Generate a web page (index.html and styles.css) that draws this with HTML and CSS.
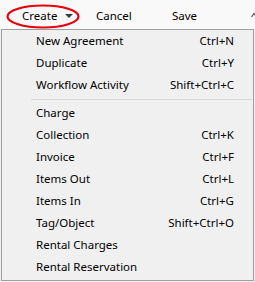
FILE: index.html
```html
<!DOCTYPE html>
<html lang="en">
<head>
    <meta charset="UTF-8">
    <title>Create menu</title>
    <link rel="stylesheet" href="styles.css">
</head>
<body>

    <!-- toolbar -->
    <div class="toolbar">
        <span class="tool tool-create">Create <span class="caret"></span></span>
        <span class="tool tool-cancel">Cancel</span>
        <span class="tool tool-save">Save</span>
        <svg class="collapse" width="6" height="6" viewBox="0 0 6 6"><path d="M0.5 5 L3 1.5 L5.5 5" fill="none" stroke="#555" stroke-width="1.2"/></svg>
        <!-- red highlight drawn over the Create button -->
        <svg class="highlight" width="74" height="25" viewBox="0 0 74 25"><ellipse cx="37" cy="12.5" rx="35.5" ry="11" fill="none" stroke="#e8000b" stroke-width="2.2"/></svg>
    </div>

    <!-- dropdown -->
    <div class="menu">
        <div class="item"><span>New Agreement</span><span class="key">Ctrl+N</span></div>
        <div class="item"><span>Duplicate</span><span class="key">Ctrl+Y</span></div>
        <div class="item"><span>Workflow Activity</span><span class="key">Shift+Ctrl+C</span></div>
        <div class="sep"></div>
        <div class="item"><span>Charge</span></div>
        <div class="item"><span>Collection</span><span class="key">Ctrl+K</span></div>
        <div class="item"><span>Invoice</span><span class="key">Ctrl+F</span></div>
        <div class="item"><span>Items Out</span><span class="key">Ctrl+L</span></div>
        <div class="item"><span>Items In</span><span class="key">Ctrl+G</span></div>
        <div class="item"><span>Tag/Object</span><span class="key">Shift+Ctrl+O</span></div>
        <div class="item"><span>Rental Charges</span></div>
        <div class="item"><span>Rental Reservation</span></div>
    </div>

</body>
</html>
```

FILE: styles.css
```css
body {
    margin: 0;
    width: 255px;
    height: 282px;
    background-color: #f0f0f0;
    font-family: "Noto Sans", "Open Sans", sans-serif;
    font-size: 11.5px;
    color: #000;
    overflow: hidden;
}
.toolbar {
    position: relative;
    height: 29px;
    background-color: #f9f9f9;
    display: flex;
    align-items: center;
    padding-left: 22px;
}
.tool {
    display: flex;
    align-items: center;
    line-height: 16px;
    margin-top: 2px;
}
.tool-create {
    width: 74px;
}
.tool-cancel {
    width: 76px;
}
.caret {
    display: inline-block;
    width: 0;
    height: 0;
    margin-left: 8px;
    border-left: 4px solid transparent;
    border-right: 4px solid transparent;
    border-top: 4px solid #2f3d4c;
}
.collapse {
    margin-left: auto;
    margin-right: -2px;
}
.highlight {
    position: absolute;
    left: 6px;
    top: 4px;
}
.menu {
    margin-left: 1px;
    width: 251px;
    height: 250px;
    border: 1px solid #a0a0a0;
    background-color: #f0f0f0;
}
.item {
    display: flex;
    justify-content: space-between;
    align-items: center;
    height: 22px;
    padding: 0 19px 1px 34px;
    box-sizing: border-box;
}
.sep {
    height: 1px;
    margin: 3px 1px 2px 29px;
    background-color: #d7d7d7;
}
```
